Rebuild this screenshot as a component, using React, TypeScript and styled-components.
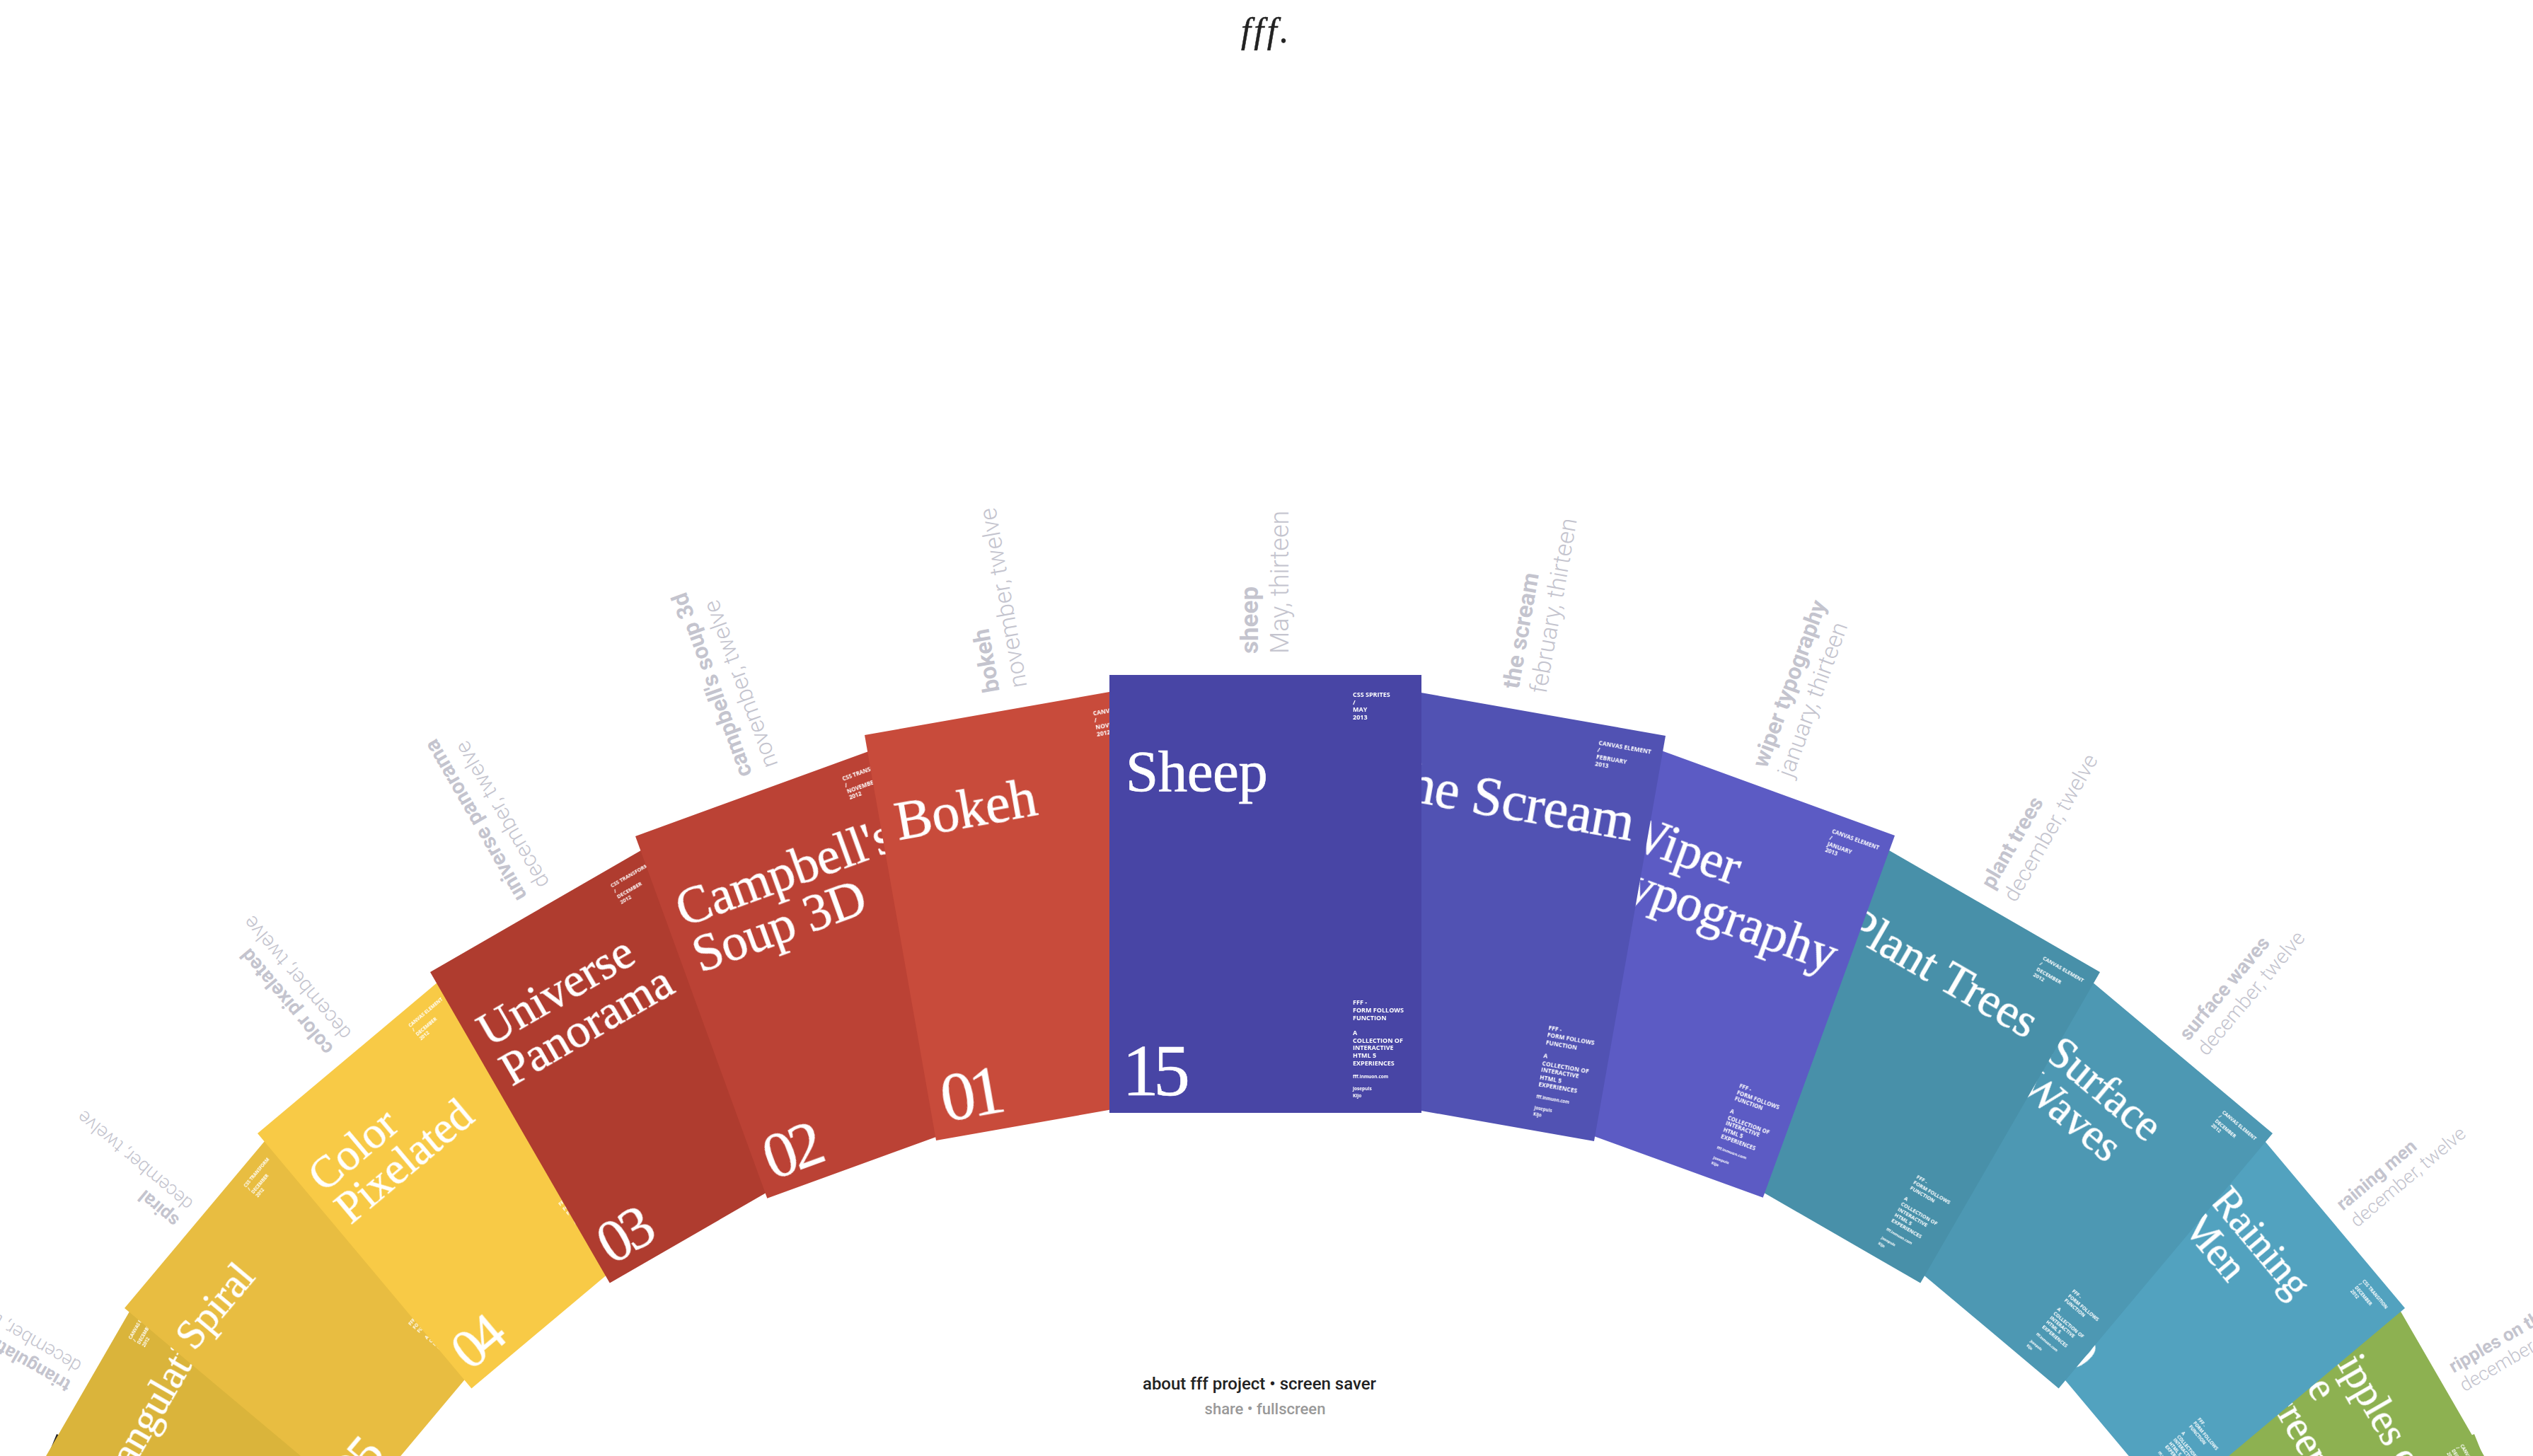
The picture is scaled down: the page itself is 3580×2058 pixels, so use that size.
import styled, { createGlobalStyle } from 'styled-components';

const GlobalStyle = createGlobalStyle`
  html, body {
    margin: 0;
    padding: 0;
    background: #fff;
    overflow: hidden;
  }
`;

const CARD_W = 441;
const CARD_H = 619;

type Poster = {
  slug: string;
  date: string;
  title: string[];
  num: string;
  color: string;
  tech: string;
  month: string;
  year: string;
  angle: number;
  corner: [number, number];
  scale: number;
  labelSize: number;
};

const posters: Poster[] = [
  { slug: 'sheep', date: 'May, thirteen', title: ['Sheep'], num: '15', color: '#4845a5', tech: 'CSS SPRITES', month: 'MAY', year: '2013', angle: 0, corner: [2009, 954], scale: 1, labelSize: 35 },
  { slug: 'the scream', date: 'february, thirteen', title: ['The Scream'], num: '14', color: '#5152b3', tech: 'CANVAS ELEMENT', month: 'FEBRUARY', year: '2013', angle: 10, corner: [2354, 1040], scale: 0.94, labelSize: 33 },
  { slug: 'wiper typography', date: 'january, thirteen', title: ['Wiper', 'Typography'], num: '13', color: '#5c5bc4', tech: 'CANVAS ELEMENT', month: 'JANUARY', year: '2013', angle: 20, corner: [2678, 1181], scale: 0.88, labelSize: 32 },
  { slug: 'plant trees', date: 'december, twelve', title: ['Plant Trees'], num: '12', color: '#4890a9', tech: 'CANVAS ELEMENT', month: 'DECEMBER', year: '2012', angle: 30, corner: [2968, 1374], scale: 0.82, labelSize: 30 },
  { slug: 'surface waves', date: 'december, twelve', title: ['Surface', 'Waves'], num: '11', color: '#4d98b3', tech: 'CANVAS ELEMENT', month: 'DECEMBER', year: '2012', angle: 40, corner: [3212, 1602], scale: 0.76, labelSize: 28 },
  { slug: 'raining men', date: 'december, twelve', title: ['Raining', 'Men'], num: '10', color: '#52a2bf', tech: 'CSS TRANSITION', month: 'DECEMBER', year: '2012', angle: 50, corner: [3399, 1849], scale: 0.7, labelSize: 26 },
  { slug: 'ripples on the screen', date: 'december, twelve', title: ['Ripples on', 'the', 'Screen'], num: '09', color: '#8db151', tech: 'CANVAS ELEMENT', month: 'DECEMBER', year: '2012', angle: 60, corner: [3530, 2091], scale: 0.7, labelSize: 26 },
  { slug: 'bokeh', date: 'november, twelve', title: ['Bokeh'], num: '01', color: '#c84b3b', tech: 'CANVAS ELEMENT', month: 'NOVEMBER', year: '2012', angle: -10, corner: [1222, 1039], scale: 0.94, labelSize: 33 },
  { slug: "campbell's soup 3d", date: 'november, twelve', title: ["Campbell's", 'Soup 3D'], num: '02', color: '#bb4235', tech: 'CSS TRANSFORM', month: 'NOVEMBER', year: '2012', angle: -20, corner: [898, 1182], scale: 0.88, labelSize: 32 },
  { slug: 'universe panorama', date: 'december, twelve', title: ['Universe', 'Panorama'], num: '03', color: '#af3c2f', tech: 'CSS TRANSFORM', month: 'DECEMBER', year: '2012', angle: -30, corner: [608, 1374], scale: 0.82, labelSize: 30 },
  { slug: 'color pixelated', date: 'december, twelve', title: ['Color', 'Pixelated'], num: '04', color: '#f8ca46', tech: 'CANVAS ELEMENT', month: 'DECEMBER', year: '2012', angle: -40, corner: [364, 1602], scale: 0.76, labelSize: 28 },
  { slug: 'spiral', date: 'december, twelve', title: ['Spiral'], num: '05', color: '#e8bd41', tech: 'CSS TRANSFORM', month: 'DECEMBER', year: '2012', angle: -50, corner: [176, 1849], scale: 0.7, labelSize: 26 },
  { slug: 'triangulation', date: 'december, twelve', title: ['Triangulation'], num: '06', color: '#dab43b', tech: 'CANVAS ELEMENT', month: 'DECEMBER', year: '2012', angle: -60, corner: [46, 2091], scale: 0.7, labelSize: 26 },
];

const Page = styled.div`
  position: relative;
  height: 100vh;
  overflow: hidden;
  display: flex;
  flex-direction: column;
  justify-content: space-between;
  align-items: center;
  font-family: Roboto, "Liberation Sans", sans-serif;
`;

const Logo = styled.h1`
  margin: 15px 0 0 0;
  font: italic 400 50px/56px "Liberation Serif", serif;
  letter-spacing: 4.5px;
  -webkit-text-stroke: 0.5px #222;
  color: #222;
`;

const Fan = styled.div`
  position: absolute;
  inset: 0;
`;

const Card = styled.article<{ $color: string; $x: number; $y: number; $angle: number; $scale: number }>`
  position: absolute;
  left: ${p => (p.$angle < 0 ? p.$x : p.$x - CARD_W)}px;
  top: ${p => p.$y}px;
  z-index: ${p => 20 - Math.round(Math.abs(p.$angle) / 10)};
  width: ${CARD_W}px;
  height: ${CARD_H}px;
  background: ${p => p.$color};
  color: #fff;
  transform-origin: ${p => (p.$angle < 0 ? '0 0' : '100% 0')};
  transform: rotate(${p => p.$angle}deg) scale(${p => p.$scale});
  display: grid;
  grid-template-columns: 344px 97px;
  grid-template-rows: 1fr auto;
`;

const Title = styled.h2`
  margin: 0;
  padding: 97px 0 0 23px;
  font: 400 83px/78px "Liberation Serif", serif;
  white-space: nowrap;
  letter-spacing: -0.5px;
  -webkit-text-stroke: 0.7px #fff;
  filter: blur(0.5px);
`;

const Meta = styled.div`
  padding-top: 23px;
  font: 700 9px/10.7px "Open Sans", sans-serif;
  white-space: nowrap;
  filter: blur(0.7px);
`;

const Num = styled.div`
  align-self: end;
  padding: 0 0 10px 18px;
  font: 400 104px/100px "Liberation Serif", serif;
  letter-spacing: -8px;
  -webkit-text-stroke: 0.5px #fff;
  filter: blur(0.5px);
`;

const Colophon = styled(Meta)`
  padding: 0 0 20px 0;
  align-self: end;
`;

const Gap = styled.div`
  height: 10.7px;
`;

const Tiny = styled.div`
  font-size: 6.5px;
  line-height: 9.5px;
  margin-top: 8px;
`;

const Label = styled.div<{ $size: number; $scale: number }>`
  position: absolute;
  left: 50%;
  top: -30px;
  transform-origin: 0 0;
  transform: rotate(-90deg) translateY(-50%);
  white-space: nowrap;
  font-size: ${p => p.$size / p.$scale}px;
  line-height: 1.17;
  color: #c4c4ce;
`;

const LabelName = styled.div`
  font-weight: 700;
`;

const LabelDate = styled.div`
  font-weight: 300;
  font-size: 1.03em;
`;

// only the corner of the next poster peeks out behind the fan
const PeekCorner = styled.div<{ $color: string; $x: number; $angle: number }>`
  position: absolute;
  left: ${p => (p.$angle > 0 ? p.$x : p.$x - 60)}px;
  top: 2027px;
  z-index: 1;
  width: 60px;
  height: 80px;
  background: ${p => p.$color};
  transform-origin: ${p => (p.$angle > 0 ? '0 0' : '100% 0')};
  transform: rotate(${p => p.$angle}deg);
`;

const Footer = styled.footer`
  margin-bottom: 48px;
  text-align: center;
  font-size: 24px;
  line-height: 36px;
  font-weight: 500;
`;

const FooterLinks = styled.div`
  color: #222;
  transform: translateX(-10px);
`;

const FooterSub = styled.div`
  color: #999;
  font-size: 22px;
  transform: translateX(-2px);
`;

export default function App() {
  return (
    <Page>
      <GlobalStyle />
      <Logo>fff.</Logo>
      <Fan>
        <PeekCorner $color="#222" $x={80} $angle={22} />
        <PeekCorner $color="#8db151" $x={3497} $angle={-22} />
        {posters.map(p => (
          <Card key={p.slug} $color={p.color} $x={p.corner[0]} $y={p.corner[1]} $angle={p.angle} $scale={p.scale}>
            <Label $size={p.labelSize} $scale={p.scale}>
              <LabelName>{p.slug}</LabelName>
              <LabelDate>{p.date}</LabelDate>
            </Label>
            <Title>
              {p.title.map(line => (
                <div key={line}>{line}</div>
              ))}
            </Title>
            <Meta>
              <div>{p.tech}</div>
              <div>/</div>
              <div>{p.month}</div>
              <div>{p.year}</div>
            </Meta>
            <Num>{p.num}</Num>
            <Colophon>
              <div>FFF -</div>
              <div>FORM FOLLOWS</div>
              <div>FUNCTION</div>
              <Gap />
              <div>A</div>
              <div>COLLECTION OF</div>
              <div>INTERACTIVE</div>
              <div>HTML 5</div>
              <div>EXPERIENCES</div>
              <Tiny>fff.inmuon.com</Tiny>
              <Tiny>
                <div>josepuis</div>
                <div>Kijo</div>
              </Tiny>
            </Colophon>
          </Card>
        ))}
      </Fan>
      <Footer>
        <FooterLinks>about fff project • screen saver</FooterLinks>
        <FooterSub>share • fullscreen</FooterSub>
      </Footer>
    </Page>
  );
}
